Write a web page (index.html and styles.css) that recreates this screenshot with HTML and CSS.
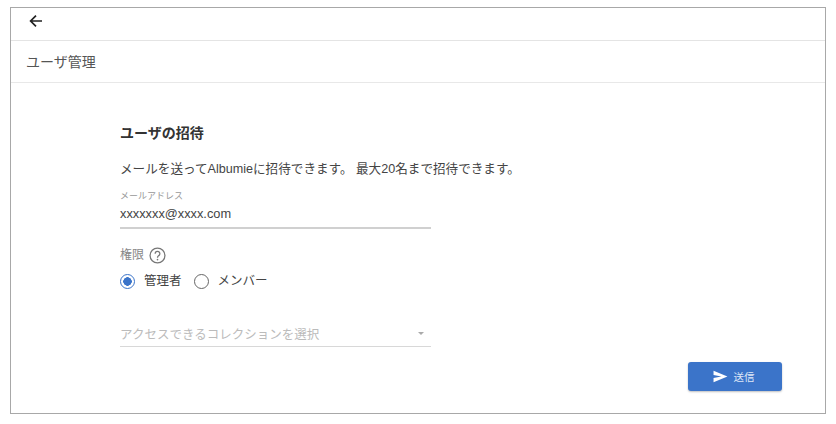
FILE: index.html
```html
<!DOCTYPE html>
<html lang="ja">
<head>
<meta charset="utf-8">
<title>ユーザ管理</title>
<link rel="stylesheet" href="styles.css">
</head>
<body>
<div class="frame">
  <div class="topbar">
    <svg class="back" viewBox="0 0 16 16" width="16" height="16"><path d="M14 8H3M8 2.6 2.6 8 8 13.4" fill="none" stroke="#222" stroke-width="1.7"/></svg>
  </div>
  <div class="titlebar">ユーザ管理</div>
  <main class="content">
    <h1 class="heading">ユーザの招待</h1>
    <p class="desc">メールを送ってAlbumieに招待できます。 最大20名まで招待できます。</p>
    <div class="field">
      <div class="field-label">メールアドレス</div>
      <div class="field-value">xxxxxxx@xxxx.com</div>
    </div>
    <div class="perm">
      <span>権限</span>
      <svg class="help" viewBox="0 0 16 16" width="17" height="17"><circle cx="8" cy="8" r="7" fill="none" stroke="#777" stroke-width="1.2"/><path d="M5.8 6.3a2.2 2.2 0 1 1 3.4 1.8C8.4 8.7 8 9 8 10" fill="none" stroke="#777" stroke-width="1.2"/><circle cx="8" cy="11.8" r=".8" fill="#777"/></svg>
    </div>
    <div class="radios">
      <span class="radio radio-on"></span><span class="radio-text">管理者</span>
      <span class="radio"></span><span class="radio-text">メンバー</span>
    </div>
    <div class="select">
      <span>アクセスできるコレクションを選択</span>
      <span class="caret"></span>
    </div>
    <div class="actions">
      <button class="send" type="button">
        <svg viewBox="0 0 16 14" width="15" height="13"><path d="M0.5 0.8 15.5 7 0.5 13.2V8.6L9 7 0.5 5.4Z" fill="#fff"/></svg>
        <span>送信</span>
      </button>
    </div>
  </main>
</div>
</body>
</html>
```
FILE: styles.css
```css
* { box-sizing: border-box; }
html, body { margin: 0; background: #fff; }
body {
  width: 836px;
  height: 424px;
  padding: 7px 10px 0;
  overflow: hidden;
  font-family: "Liberation Sans", "Noto Sans CJK JP", sans-serif;
  color: #444;
}
.frame {
  width: 816px;
  height: 407px;
  border: 1px solid #a8a8a8;
  display: flex;
  flex-direction: column;
}
.topbar {
  height: 33px;
  flex: none;
  border-bottom: 1px solid #e4e4e4;
  display: flex;
  align-items: center;
  padding: 0 0 7px 17px;
}
.titlebar {
  height: 42px;
  flex: none;
  border-bottom: 1px solid #e8e8e8;
  display: flex;
  align-items: center;
  padding: 0 0 2px 15px;
  font-size: 14px;
  color: #555;
}
.content {
  flex: 1;
  display: flex;
  flex-direction: column;
  padding: 40px 43px 0 109px;
}
.heading {
  margin: 0;
  font-size: 14px;
  line-height: 20px;
  font-weight: 700;
  color: #333;
}
.desc {
  margin: 17px 0 0;
  font-size: 12.6px;
  line-height: 18px;
  color: #444;
}
.field { margin-top: 12px; width: 311px; }
.field-label { font-size: 9px; line-height: 12px; color: #999; }
.field-value {
  margin-top: 3px;
  height: 24px;
  border-bottom: 2px solid #d0d0d0;
  font-size: 12.8px;
  line-height: 18px;
  color: #444;
}
.perm {
  margin-top: 17px;
  display: flex;
  align-items: center;
  gap: 5px;
  font-size: 12px;
  line-height: 18px;
  color: #888;
}
.radios {
  margin-top: 8px;
  display: flex;
  align-items: center;
  font-size: 12.5px;
  line-height: 18px;
  color: #444;
}
.radio {
  width: 15px;
  height: 15px;
  border: 1.5px solid #666;
  border-radius: 50%;
  flex: none;
}
.radio-on {
  border-color: #3b74c9;
  background: radial-gradient(circle, #3b74c9 0 4px, #fff 4.5px);
}
.radio-text { margin: 0 12px 0 9px; }
.select {
  margin-top: 33px;
  width: 311px;
  height: 24px;
  display: flex;
  justify-content: space-between;
  align-items: center;
  border-bottom: 1px solid #d8d8d8;
  font-size: 12.5px;
  color: #bbb;
  padding: 0 7px 2px 0;
}
.caret {
  width: 0;
  height: 0;
  border-left: 3.5px solid transparent;
  border-right: 3.5px solid transparent;
  border-top: 3.5px solid #aaa;
}
.actions {
  margin-top: 15px;
  display: flex;
  justify-content: flex-end;
}
.send {
  width: 94px;
  height: 29px;
  border: 0;
  border-radius: 3px;
  background: #3b74c9;
  color: #dfe8f7;
  display: flex;
  align-items: center;
  justify-content: center;
  gap: 6px;
  font-family: inherit;
  font-size: 10.5px;
  padding: 0 3px 0 0;
  box-shadow: 0 1px 2px rgba(0,0,0,.25);
}
```
